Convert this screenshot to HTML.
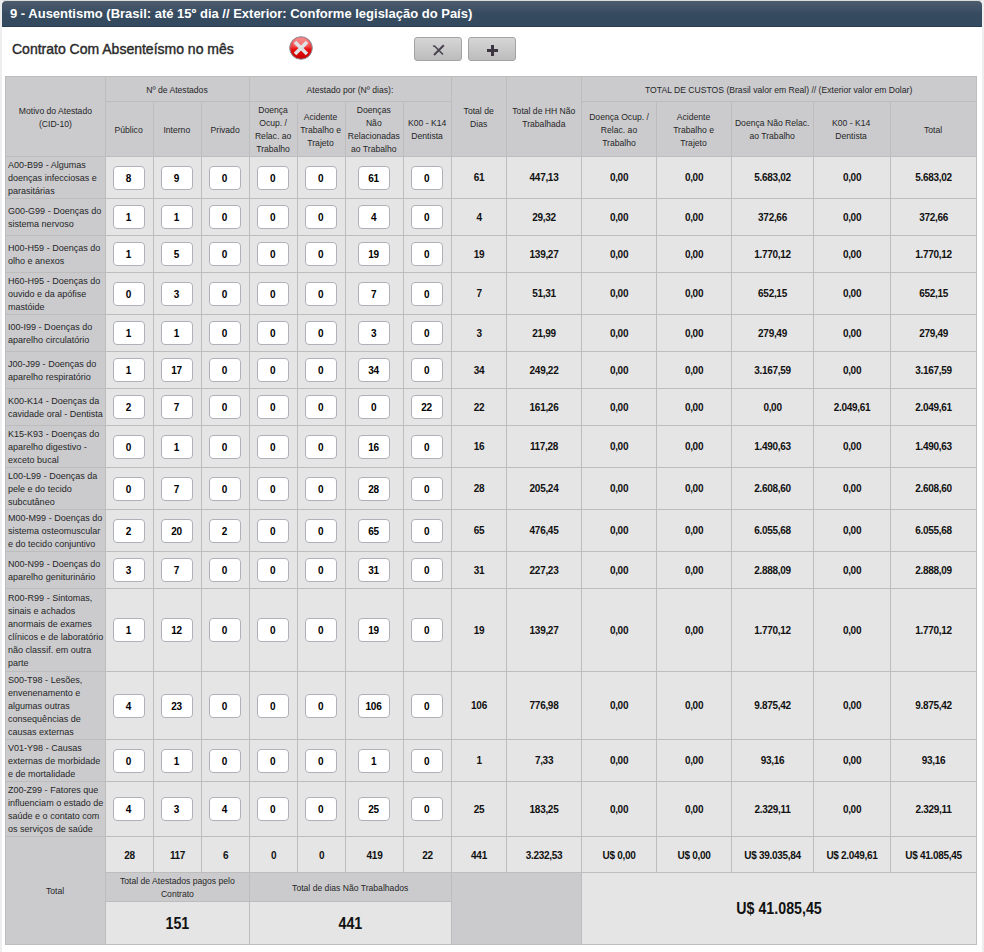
<!DOCTYPE html><html><head><meta charset="utf-8"><title>Ausentismo</title><style>
*{box-sizing:border-box}
html,body{margin:0;padding:0;background:#fff;width:984px;height:952px;overflow:hidden;font-family:"Liberation Sans",sans-serif}
.pl{position:absolute;left:0;top:0;width:2px;height:952px;background:#eeeef1}
.pr{position:absolute;left:982px;top:0;width:2px;height:952px;background:#eeeef1}
.pt{position:absolute;left:0;top:0;width:984px;height:1px;background:#dcdcdc}
.hd{position:absolute;left:2px;top:1px;width:980px;height:26px;border-radius:4px 4px 0 0;
 background:linear-gradient(#4d5c6d 0px,#435468 6px,#364b60 13px,#344a5f 25px,#283c51 25px,#283c51 26px);}
.hd span{position:absolute;left:8px;top:5px;color:#fff;font-weight:bold;font-size:13px;line-height:16px;white-space:nowrap}
.sub{position:absolute;left:12px;top:41px;font-size:14px;line-height:16px;color:#2a2a2a;white-space:nowrap;-webkit-text-stroke:0.4px #2a2a2a}
.xic{position:absolute;left:289px;top:36px;width:24px;height:24px}
.btn{position:absolute;top:37px;width:48px;height:24px;border:1px solid #a3a3a3;border-radius:3px;background:linear-gradient(#d6d6d6,#bcbcbc)}
table{position:absolute;left:5px;top:76px;border-collapse:collapse;table-layout:fixed;width:971px}
td{border:1px solid #bdbdbd;padding:0;text-align:center;vertical-align:middle;overflow:hidden}
.h{background:#cbcbce;color:#262626;font-size:9.5px;line-height:13px}
.h>span{display:inline-block;transform:scaleX(0.905);white-space:nowrap;margin:0 -40px;position:relative;left:-0.5px}
.m{background:#cbcbce;color:#262626;font-size:9.5px;line-height:13px;text-align:left;padding-left:2px;white-space:nowrap}
.m>span{display:inline-block;transform:scaleX(0.95);transform-origin:0 50%}
.c{background:#e5e5e5;color:#111;font-size:10px;font-weight:bold;letter-spacing:-0.3px}
.in{display:inline-block;width:32px;height:24px;border:1px solid #aeb2b8;border-radius:4px;background:#fff;font-size:10px;font-weight:bold;line-height:24px;color:#000;letter-spacing:-0.3px;vertical-align:middle;position:relative;left:-1px}
.ci{padding-top:0}
.big{font-size:16px;letter-spacing:0}
.big>span{display:inline-block;transform:scaleX(0.89)}
</style></head><body>
<div class="pt"></div><div class="pl"></div><div class="pr"></div>
<div class="hd"><span>9 - Ausentismo (Brasil: até 15º dia // Exterior: Conforme legislação do País)</span></div>
<div class="sub">Contrato Com Absenteísmo no mês</div>
<svg class="xic" viewBox="0 0 24 24"><defs><linearGradient id="rg" x1="0" y1="0" x2="0" y2="1"><stop offset="0" stop-color="#f47c7c"/><stop offset="0.45" stop-color="#ef4040"/><stop offset="0.55" stop-color="#e81010"/><stop offset="1" stop-color="#c80000"/></linearGradient></defs>
<circle cx="12" cy="12" r="11.3" fill="url(#rg)" stroke="#8a8f98" stroke-width="1"/>
<ellipse cx="12" cy="7" rx="8" ry="5" fill="#ffb0b0" opacity="0.35"/>
<path d="M7.3 7.3 L16.7 16.7 M16.7 7.3 L7.3 16.7" stroke="#dfe3e6" stroke-width="3.6" stroke-linecap="square"/></svg>
<div class="btn" style="left:414px"><svg width="46" height="22" viewBox="0 0 46 22" style="position:absolute;left:0;top:0"><path d="M19 17 L28.8 7.3" stroke="#4a4050" stroke-width="2" fill="none"/><path d="M18 8.4 Q19.3 7.4 20.6 9 L28 16.5" stroke="#4a4550" stroke-width="1.6" fill="none"/></svg></div>
<div class="btn" style="left:468px"><svg width="46" height="22" viewBox="0 0 46 22" style="position:absolute;left:0;top:0"><path d="M18 12.5 H29 M23.5 7 V18" stroke="#3a3540" stroke-width="3" fill="none"/></svg></div>
<table><colgroup>
<col style="width:100px">
<col style="width:48px">
<col style="width:48px">
<col style="width:48px">
<col style="width:48px">
<col style="width:48px">
<col style="width:58px">
<col style="width:48px">
<col style="width:55px">
<col style="width:75px">
<col style="width:75px">
<col style="width:75px">
<col style="width:82px">
<col style="width:77px">
<col style="width:86px">
</colgroup>
<tr style="height:25px">
<td class="h" rowspan="2"><span>Motivo do Atestado<br>(CID-10)</span></td>
<td class="h" colspan="3"><span>Nº de Atestados</span></td>
<td class="h" colspan="4"><span>Atestado por (Nº dias):</span></td>
<td class="h" rowspan="2"><span>Total de<br>Dias</span></td>
<td class="h" rowspan="2"><span>Total de HH Não<br>Trabalhada</span></td>
<td class="h" colspan="5"><span>TOTAL DE CUSTOS (Brasil valor em Real) // (Exterior valor em Dolar)</span></td>
</tr>
<tr style="height:55px">
<td class="h"><span>Público</span></td>
<td class="h"><span>Interno</span></td>
<td class="h"><span>Privado</span></td>
<td class="h"><span>Doença<br>Ocup. /<br>Relac. ao<br>Trabalho</span></td>
<td class="h"><span>Acidente<br>Trabalho e<br>Trajeto</span></td>
<td class="h"><span>Doenças<br>Não<br>Relacionadas<br>ao Trabalho</span></td>
<td class="h"><span>K00 - K14<br>Dentista</span></td>
<td class="h"><span>Doença Ocup. /<br>Relac. ao<br>Trabalho</span></td>
<td class="h"><span>Acidente<br>Trabalho e<br>Trajeto</span></td>
<td class="h"><span>Doença Não Relac.<br>ao Trabalho</span></td>
<td class="h"><span>K00 - K14<br>Dentista</span></td>
<td class="h"><span>Total</span></td>
</tr>
<tr style="height:42px">
<td class="m"><span>A00-B99 - Algumas<br>doenças infecciosas e<br>parasitárias</span></td>
<td class="c ci"><span class="in">8</span></td>
<td class="c ci"><span class="in">9</span></td>
<td class="c ci"><span class="in">0</span></td>
<td class="c ci"><span class="in">0</span></td>
<td class="c ci"><span class="in">0</span></td>
<td class="c ci"><span class="in">61</span></td>
<td class="c ci"><span class="in">0</span></td>
<td class="c">61</td>
<td class="c">447,13</td>
<td class="c">0,00</td>
<td class="c">0,00</td>
<td class="c">5.683,02</td>
<td class="c">0,00</td>
<td class="c">5.683,02</td>
</tr>
<tr style="height:37px">
<td class="m"><span>G00-G99 - Doenças do<br>sistema nervoso</span></td>
<td class="c ci"><span class="in">1</span></td>
<td class="c ci"><span class="in">1</span></td>
<td class="c ci"><span class="in">0</span></td>
<td class="c ci"><span class="in">0</span></td>
<td class="c ci"><span class="in">0</span></td>
<td class="c ci"><span class="in">4</span></td>
<td class="c ci"><span class="in">0</span></td>
<td class="c">4</td>
<td class="c">29,32</td>
<td class="c">0,00</td>
<td class="c">0,00</td>
<td class="c">372,66</td>
<td class="c">0,00</td>
<td class="c">372,66</td>
</tr>
<tr style="height:37px">
<td class="m"><span>H00-H59 - Doenças do<br>olho e anexos</span></td>
<td class="c ci"><span class="in">1</span></td>
<td class="c ci"><span class="in">5</span></td>
<td class="c ci"><span class="in">0</span></td>
<td class="c ci"><span class="in">0</span></td>
<td class="c ci"><span class="in">0</span></td>
<td class="c ci"><span class="in">19</span></td>
<td class="c ci"><span class="in">0</span></td>
<td class="c">19</td>
<td class="c">139,27</td>
<td class="c">0,00</td>
<td class="c">0,00</td>
<td class="c">1.770,12</td>
<td class="c">0,00</td>
<td class="c">1.770,12</td>
</tr>
<tr style="height:42px">
<td class="m"><span>H60-H95 - Doenças do<br>ouvido e da apófise<br>mastóide</span></td>
<td class="c ci"><span class="in">0</span></td>
<td class="c ci"><span class="in">3</span></td>
<td class="c ci"><span class="in">0</span></td>
<td class="c ci"><span class="in">0</span></td>
<td class="c ci"><span class="in">0</span></td>
<td class="c ci"><span class="in">7</span></td>
<td class="c ci"><span class="in">0</span></td>
<td class="c">7</td>
<td class="c">51,31</td>
<td class="c">0,00</td>
<td class="c">0,00</td>
<td class="c">652,15</td>
<td class="c">0,00</td>
<td class="c">652,15</td>
</tr>
<tr style="height:37px">
<td class="m"><span>I00-I99 - Doenças do<br>aparelho circulatório</span></td>
<td class="c ci"><span class="in">1</span></td>
<td class="c ci"><span class="in">1</span></td>
<td class="c ci"><span class="in">0</span></td>
<td class="c ci"><span class="in">0</span></td>
<td class="c ci"><span class="in">0</span></td>
<td class="c ci"><span class="in">3</span></td>
<td class="c ci"><span class="in">0</span></td>
<td class="c">3</td>
<td class="c">21,99</td>
<td class="c">0,00</td>
<td class="c">0,00</td>
<td class="c">279,49</td>
<td class="c">0,00</td>
<td class="c">279,49</td>
</tr>
<tr style="height:37px">
<td class="m"><span>J00-J99 - Doenças do<br>aparelho respiratório</span></td>
<td class="c ci"><span class="in">1</span></td>
<td class="c ci"><span class="in">17</span></td>
<td class="c ci"><span class="in">0</span></td>
<td class="c ci"><span class="in">0</span></td>
<td class="c ci"><span class="in">0</span></td>
<td class="c ci"><span class="in">34</span></td>
<td class="c ci"><span class="in">0</span></td>
<td class="c">34</td>
<td class="c">249,22</td>
<td class="c">0,00</td>
<td class="c">0,00</td>
<td class="c">3.167,59</td>
<td class="c">0,00</td>
<td class="c">3.167,59</td>
</tr>
<tr style="height:37px">
<td class="m"><span>K00-K14 - Doenças da<br>cavidade oral - Dentista</span></td>
<td class="c ci"><span class="in">2</span></td>
<td class="c ci"><span class="in">7</span></td>
<td class="c ci"><span class="in">0</span></td>
<td class="c ci"><span class="in">0</span></td>
<td class="c ci"><span class="in">0</span></td>
<td class="c ci"><span class="in">0</span></td>
<td class="c ci"><span class="in">22</span></td>
<td class="c">22</td>
<td class="c">161,26</td>
<td class="c">0,00</td>
<td class="c">0,00</td>
<td class="c">0,00</td>
<td class="c">2.049,61</td>
<td class="c">2.049,61</td>
</tr>
<tr style="height:42px">
<td class="m"><span>K15-K93 - Doenças do<br>aparelho digestivo -<br>exceto bucal</span></td>
<td class="c ci"><span class="in">0</span></td>
<td class="c ci"><span class="in">1</span></td>
<td class="c ci"><span class="in">0</span></td>
<td class="c ci"><span class="in">0</span></td>
<td class="c ci"><span class="in">0</span></td>
<td class="c ci"><span class="in">16</span></td>
<td class="c ci"><span class="in">0</span></td>
<td class="c">16</td>
<td class="c">117,28</td>
<td class="c">0,00</td>
<td class="c">0,00</td>
<td class="c">1.490,63</td>
<td class="c">0,00</td>
<td class="c">1.490,63</td>
</tr>
<tr style="height:42px">
<td class="m"><span>L00-L99 - Doenças da<br>pele e do tecido<br>subcutâneo</span></td>
<td class="c ci"><span class="in">0</span></td>
<td class="c ci"><span class="in">7</span></td>
<td class="c ci"><span class="in">0</span></td>
<td class="c ci"><span class="in">0</span></td>
<td class="c ci"><span class="in">0</span></td>
<td class="c ci"><span class="in">28</span></td>
<td class="c ci"><span class="in">0</span></td>
<td class="c">28</td>
<td class="c">205,24</td>
<td class="c">0,00</td>
<td class="c">0,00</td>
<td class="c">2.608,60</td>
<td class="c">0,00</td>
<td class="c">2.608,60</td>
</tr>
<tr style="height:42px">
<td class="m"><span>M00-M99 - Doenças do<br>sistema osteomuscular<br>e do tecido conjuntivo</span></td>
<td class="c ci"><span class="in">2</span></td>
<td class="c ci"><span class="in">20</span></td>
<td class="c ci"><span class="in">2</span></td>
<td class="c ci"><span class="in">0</span></td>
<td class="c ci"><span class="in">0</span></td>
<td class="c ci"><span class="in">65</span></td>
<td class="c ci"><span class="in">0</span></td>
<td class="c">65</td>
<td class="c">476,45</td>
<td class="c">0,00</td>
<td class="c">0,00</td>
<td class="c">6.055,68</td>
<td class="c">0,00</td>
<td class="c">6.055,68</td>
</tr>
<tr style="height:37px">
<td class="m"><span>N00-N99 - Doenças do<br>aparelho geniturinário</span></td>
<td class="c ci"><span class="in">3</span></td>
<td class="c ci"><span class="in">7</span></td>
<td class="c ci"><span class="in">0</span></td>
<td class="c ci"><span class="in">0</span></td>
<td class="c ci"><span class="in">0</span></td>
<td class="c ci"><span class="in">31</span></td>
<td class="c ci"><span class="in">0</span></td>
<td class="c">31</td>
<td class="c">227,23</td>
<td class="c">0,00</td>
<td class="c">0,00</td>
<td class="c">2.888,09</td>
<td class="c">0,00</td>
<td class="c">2.888,09</td>
</tr>
<tr style="height:83px">
<td class="m"><span>R00-R99 - Sintomas,<br>sinais e achados<br>anormais de exames<br>clínicos e de laboratório<br>não classif. em outra<br>parte</span></td>
<td class="c ci"><span class="in">1</span></td>
<td class="c ci"><span class="in">12</span></td>
<td class="c ci"><span class="in">0</span></td>
<td class="c ci"><span class="in">0</span></td>
<td class="c ci"><span class="in">0</span></td>
<td class="c ci"><span class="in">19</span></td>
<td class="c ci"><span class="in">0</span></td>
<td class="c">19</td>
<td class="c">139,27</td>
<td class="c">0,00</td>
<td class="c">0,00</td>
<td class="c">1.770,12</td>
<td class="c">0,00</td>
<td class="c">1.770,12</td>
</tr>
<tr style="height:68px">
<td class="m"><span>S00-T98 - Lesões,<br>envenenamento e<br>algumas outras<br>consequências de<br>causas externas</span></td>
<td class="c ci"><span class="in">4</span></td>
<td class="c ci"><span class="in">23</span></td>
<td class="c ci"><span class="in">0</span></td>
<td class="c ci"><span class="in">0</span></td>
<td class="c ci"><span class="in">0</span></td>
<td class="c ci"><span class="in">106</span></td>
<td class="c ci"><span class="in">0</span></td>
<td class="c">106</td>
<td class="c">776,98</td>
<td class="c">0,00</td>
<td class="c">0,00</td>
<td class="c">9.875,42</td>
<td class="c">0,00</td>
<td class="c">9.875,42</td>
</tr>
<tr style="height:42px">
<td class="m"><span>V01-Y98 - Causas<br>externas de morbidade<br>e de mortalidade</span></td>
<td class="c ci"><span class="in">0</span></td>
<td class="c ci"><span class="in">1</span></td>
<td class="c ci"><span class="in">0</span></td>
<td class="c ci"><span class="in">0</span></td>
<td class="c ci"><span class="in">0</span></td>
<td class="c ci"><span class="in">1</span></td>
<td class="c ci"><span class="in">0</span></td>
<td class="c">1</td>
<td class="c">7,33</td>
<td class="c">0,00</td>
<td class="c">0,00</td>
<td class="c">93,16</td>
<td class="c">0,00</td>
<td class="c">93,16</td>
</tr>
<tr style="height:55px">
<td class="m"><span>Z00-Z99 - Fatores que<br>influenciam o estado de<br>saúde e o contato com<br>os serviços de saúde</span></td>
<td class="c ci"><span class="in">4</span></td>
<td class="c ci"><span class="in">3</span></td>
<td class="c ci"><span class="in">4</span></td>
<td class="c ci"><span class="in">0</span></td>
<td class="c ci"><span class="in">0</span></td>
<td class="c ci"><span class="in">25</span></td>
<td class="c ci"><span class="in">0</span></td>
<td class="c">25</td>
<td class="c">183,25</td>
<td class="c">0,00</td>
<td class="c">0,00</td>
<td class="c">2.329,11</td>
<td class="c">0,00</td>
<td class="c">2.329,11</td>
</tr>
<tr style="height:36px">
<td class="h" rowspan="3"><span>Total</span></td>
<td class="c" style="padding-top:2px">28</td>
<td class="c" style="padding-top:2px">117</td>
<td class="c" style="padding-top:2px">6</td>
<td class="c" style="padding-top:2px">0</td>
<td class="c" style="padding-top:2px">0</td>
<td class="c" style="padding-top:2px">419</td>
<td class="c" style="padding-top:2px">22</td>
<td class="c" style="padding-top:2px">441</td>
<td class="c" style="padding-top:2px">3.232,53</td>
<td class="c" style="padding-top:2px">U$ 0,00</td>
<td class="c" style="padding-top:2px">U$ 0,00</td>
<td class="c" style="padding-top:2px">U$ 39.035,84</td>
<td class="c" style="padding-top:2px">U$ 2.049,61</td>
<td class="c" style="padding-top:2px">U$ 41.085,45</td>
</tr>
<tr style="height:29px">
<td class="h" colspan="3"><span>Total de Atestados pagos pelo<br>Contrato</span></td>
<td class="h" colspan="4"><span>Total de dias Não Trabalhados</span></td>
<td class="h" colspan="2" rowspan="2"></td>
<td class="c big" colspan="5" rowspan="2" style="padding-top:0"><span>U$ 41.085,45</span></td>
</tr>
<tr style="height:43px">
<td class="c big" colspan="3" style="padding-top:2px"><span>151</span></td>
<td class="c big" colspan="4" style="padding-top:2px"><span>441</span></td>
</tr>
</table></body></html>
